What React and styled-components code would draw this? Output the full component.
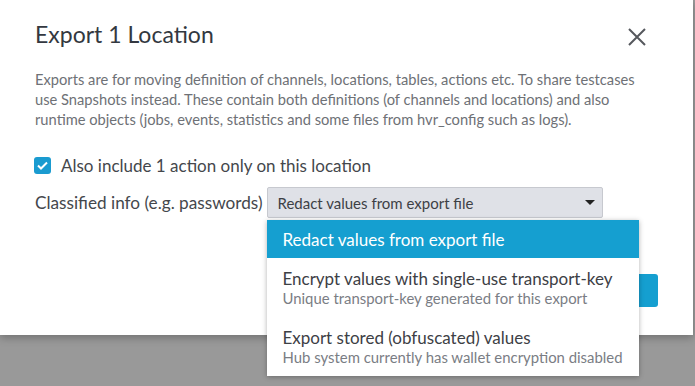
import styled, { createGlobalStyle } from "styled-components";

const GlobalStyle = createGlobalStyle`
  html, body {
    margin: 0;
    padding: 0;
    background: #999999;
    font-family: "Lato", "Noto Sans", sans-serif;
  }
`;

const Page = styled.div`
  width: 695px;
  height: 386px;
  overflow: hidden;
  background: #999999;
`;

const Dialog = styled.div`
  width: 693px;
  height: 335px;
  box-sizing: border-box;
  padding: 0 35px;
  background: #ffffff;
  box-shadow: 0 3px 8px rgba(0, 0, 0, 0.25);
`;

const Header = styled.div`
  display: flex;
  align-items: center;
  justify-content: space-between;
  height: 70px;
  padding-top: 2px;
  box-sizing: border-box;
`;

const Title = styled.h2`
  margin: 0 0 4px;
  font-size: 23px;
  font-weight: 400;
  color: #333840;
`;

const CloseButton = styled.button`
  border: 0;
  background: none;
  padding: 0;
  margin: 2px 11px 0 0;
  width: 20px;
  height: 20px;
  display: flex;
  cursor: pointer;
`;

const Description = styled.p`
  margin: -1px 0 0;
  font-size: 14.7px;
  line-height: 20px;
  white-space: nowrap;
  color: #6e7176;
`;

const CheckRow = styled.label`
  display: flex;
  align-items: center;
  gap: 10px;
  margin-top: 26px;
  font-size: 17px;
  color: #44474c;
`;

const Box = styled.span`
  width: 17px;
  height: 17px;
  border-radius: 3px;
  background: #1a9bd0;
  display: flex;
  align-items: center;
  justify-content: center;
  margin-left: -1px;
`;

const FieldRow = styled.div`
  display: flex;
  align-items: center;
  gap: 5px;
  margin-top: 11px;
  font-size: 17.2px;
  color: #44474c;
`;

const SelectWrap = styled.div`
  position: relative;
`;

const Select = styled.div`
  width: 336px;
  height: 31px;
  box-sizing: border-box;
  display: flex;
  align-items: center;
  justify-content: space-between;
  padding: 0 7px 0 9px;
  background: #dfe1e7;
  border: 1px solid #c7c9cf;
  border-radius: 2px;
  font-size: 15px;
  color: #3d4045;
`;

const Caret = styled.span`
  width: 0;
  height: 0;
  border-left: 5px solid transparent;
  border-right: 5px solid transparent;
  border-top: 5px solid #222;
`;

const Menu = styled.ul`
  position: absolute;
  top: 33px;
  left: 0;
  width: 372px;
  margin: 0;
  padding: 0;
  list-style: none;
  background: #ffffff;
  box-shadow: 0 1px 5px rgba(0, 0, 0, 0.3);
  z-index: 2;
`;

const Option = styled.li`
  padding: ${(p) => (p.$active ? "9px 15px 8px" : "10px 15px 10px")};
  background: ${(p) => (p.$active ? "#159fd0" : "transparent")};
  color: ${(p) => (p.$active ? "#ffffff" : "#3d4045")};
  font-size: 17px;
  line-height: 21px;
  white-space: nowrap;
`;

const Hint = styled.div`
  font-size: 14.9px;
  line-height: 18px;
  color: #7a7d84;
`;

const Footer = styled.div`
  display: flex;
  justify-content: flex-end;
  margin-top: 56px;
`;

const Button = styled.button`
  height: 33px;
  padding: 0 22px;
  border: 0;
  border-radius: 3px;
  font-family: inherit;
  font-size: 15px;
  background: #159fd0;
  color: #ffffff;
`;

const options = [
  { label: "Redact values from export file" },
  {
    label: "Encrypt values with single-use transport-key",
    hint: "Unique transport-key generated for this export",
  },
  {
    label: "Export stored (obfuscated) values",
    hint: "Hub system currently has wallet encryption disabled",
  },
];

export default function App() {
  return (
    <Page>
      <GlobalStyle />
      <Dialog>
        <Header>
          <Title>Export 1 Location</Title>
          <CloseButton aria-label="Close">
            <svg width="20" height="20" viewBox="0 0 20 20">
              <path d="M2 2L18 18M18 2L2 18" stroke="#55585d" strokeWidth="2" />
            </svg>
          </CloseButton>
        </Header>
        <Description>
          Exports are for moving definition of channels, locations, tables, actions etc. To share testcases
          <br />
          use Snapshots instead. These contain both definitions (of channels and locations) and also
          <br />
          runtime objects (jobs, events, statistics and some files from hvr_config such as logs).
        </Description>
        <CheckRow>
          <Box>
            <svg width="11" height="9" viewBox="0 0 11 9">
              <path d="M1 4.5L4 7.5L10 1.5" fill="none" stroke="#fff" strokeWidth="2" />
            </svg>
          </Box>
          Also include 1 action only on this location
        </CheckRow>
        <FieldRow>
          Classified info (e.g. passwords)
          <SelectWrap>
            <Select>
              Redact values from export file
              <Caret />
            </Select>
            <Menu>
              {options.map((o, i) => (
                <Option key={i} $active={i === 0}>
                  {o.label}
                  {o.hint && <Hint>{o.hint}</Hint>}
                </Option>
              ))}
            </Menu>
          </SelectWrap>
        </FieldRow>
        <Footer>
          <Button>Export</Button>
        </Footer>
      </Dialog>
    </Page>
  );
}
